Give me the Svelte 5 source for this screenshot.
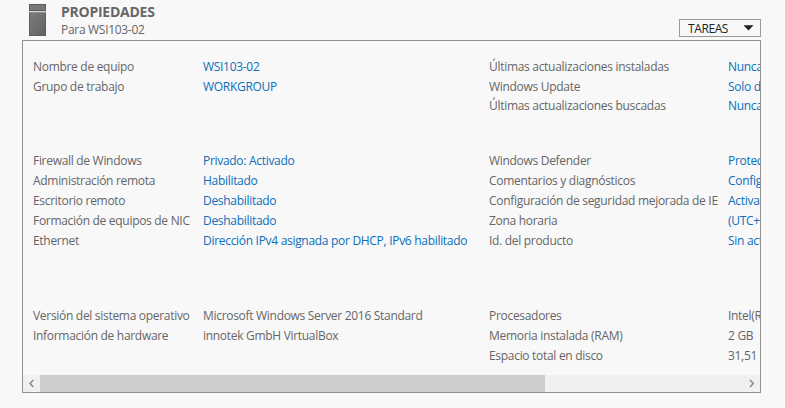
<script>
  const groups = [
    {
      height: 94,
      rowHeight: 19.5,
      left: [['Nombre de equipo', 'WSI103-02'], ['Grupo de trabajo', 'WORKGROUP']],
      right: [
        ['Últimas actualizaciones instaladas', 'Nunca'],
        ['Windows Update', 'Solo descargar'],
        ['Últimas actualizaciones buscadas', 'Nunca']
      ]
    },
    {
      height: 155,
      rowHeight: 20,
      left: [
        ['Firewall de Windows', 'Privado: Activado'],
        ['Administración remota', 'Habilitado'],
        ['Escritorio remoto', 'Deshabilitado'],
        ['Formación de equipos de NIC', 'Deshabilitado'],
        ['Ethernet', 'Dirección IPv4 asignada por DHCP, IPv6 habilitado']
      ],
      right: [
        ['Windows Defender', 'Protección'],
        ['Comentarios y diagnósticos', 'Configuración'],
        ['Configuración de seguridad mejorada de IE', 'Activado'],
        ['Zona horaria', '(UTC+01:00)'],
        ['Id. del producto', 'Sin activar']
      ]
    },
    {
      height: 69,
      rowHeight: 20,
      plain: true,
      left: [
        ['Versión del sistema operativo', 'Microsoft Windows Server 2016 Standard'],
        ['Información de hardware', 'innotek GmbH VirtualBox']
      ],
      right: [
        ['Procesadores', 'Intel(R)'],
        ['Memoria instalada (RAM)', '2 GB'],
        ['Espacio total en disco', '31,51 GB']
      ]
    }
  ];
</script>

<main>
  <header>
    <svg class="server" width="17" height="32" viewBox="0 0 17 32" shape-rendering="crispEdges">
      <defs>
        <linearGradient id="metal" x1="0" y1="0" x2="1" y2="1">
          <stop offset="0" stop-color="#7c7c7c" />
          <stop offset="1" stop-color="#626262" />
        </linearGradient>
      </defs>
      <rect x=".5" y=".5" width="16" height="6" fill="#777" stroke="#5c5c5c" />
      <rect y="7" width="17" height="1" fill="#d4d4d4" />
      <rect x=".5" y="8.5" width="16" height="23" fill="url(#metal)" stroke="#5c5c5c" />
      <rect y="8" width="17" height="1" fill="#8c8c8c" />
    </svg>
    <div class="titles">
      <h1>PROPIEDADES</h1>
      <p>Para WSI103-02</p>
    </div>
    <button>
      <span>TAREAS</span>
      <svg width="11" height="6" viewBox="0 0 11 6"><path d="M.5 .3H10.5L5.5 5.6Z" fill="#222" /></svg>
    </button>
  </header>

  <section class="panel">
    <div class="content">
      {#each groups as group}
        <div class="group" class:plain={group.plain} style:height="{group.height}px">
          {#each [group.left, group.right] as rows, side}
            <dl class:right={side === 1} style:grid-auto-rows="{group.rowHeight}px">
              {#each rows as [label, value]}
                <dt><span>{label}</span></dt>
                <dd><span>{value}</span></dd>
              {/each}
            </dl>
          {/each}
        </div>
      {/each}
    </div>
    <div class="scrollbar">
      <svg width="17" height="17" viewBox="0 0 17 17"><path d="M10.3 5L7 8.5L10.3 12" /></svg>
      <div class="track"><div class="thumb"></div></div>
      <svg width="17" height="17" viewBox="0 0 17 17"><path d="M7 5L10.3 8.5L7 12" /></svg>
    </div>
  </section>
</main>

<style>
  :global(body) { margin: 0; background: #f8f8f8; }
  main {
    box-sizing: border-box;
    width: 785px;
    height: 408px;
    padding: 0 24px 0 22px;
    overflow: hidden;
    background: #f8f8f8;
    color: #666;
    font: 12px/20px "Open Sans", "Noto Sans", sans-serif;
    letter-spacing: -0.3px;
  }
  header { display: flex; height: 40px; }
  .server { margin: 4px 15px 0 7px; }
  .titles { flex: 1; }
  h1 { margin: 3px 0 0; font-size: 14px; line-height: 18px; font-weight: 700; letter-spacing: -0.25px; }
  p { margin: 0; line-height: 18px; }
  button {
    display: flex;
    align-items: center;
    justify-content: space-between;
    box-sizing: border-box;
    width: 82px;
    height: 18px;
    margin: 19px 0 0;
    padding: 0 6px 0 8px;
    border: 1px solid #999;
    border-radius: 0;
    background: #f8f8f8;
    color: #222;
    font: 12px/16px "Open Sans", "Noto Sans", sans-serif;
    letter-spacing: -0.4px;
  }
  button span { position: relative; top: 1px; }
  .panel {
    display: flex;
    flex-direction: column;
    box-sizing: border-box;
    width: 739px;
    height: 353px;
    border: 1px solid #929292;
    overflow: hidden;
  }
  .content { flex: 1; padding: 16px 0 0 10px; overflow: hidden; white-space: nowrap; }
  .group { display: flex; }
  dl { display: grid; grid-template-columns: 170px 286px; align-content: start; flex: none; margin: 0; }
  dl.right { grid-template-columns: 239px 120px; }
  dd { margin: 0; color: #0a6fbc; }
  .plain dd { color: #666; }
  .scrollbar { display: flex; flex: none; height: 17px; background: #f0f0f0; }
  .scrollbar path { fill: none; stroke: #8a8a8a; stroke-width: 1.5; }
  .track { flex: 1; }
  .thumb { width: 505px; height: 17px; background: #cdcdcd; }
</style>
